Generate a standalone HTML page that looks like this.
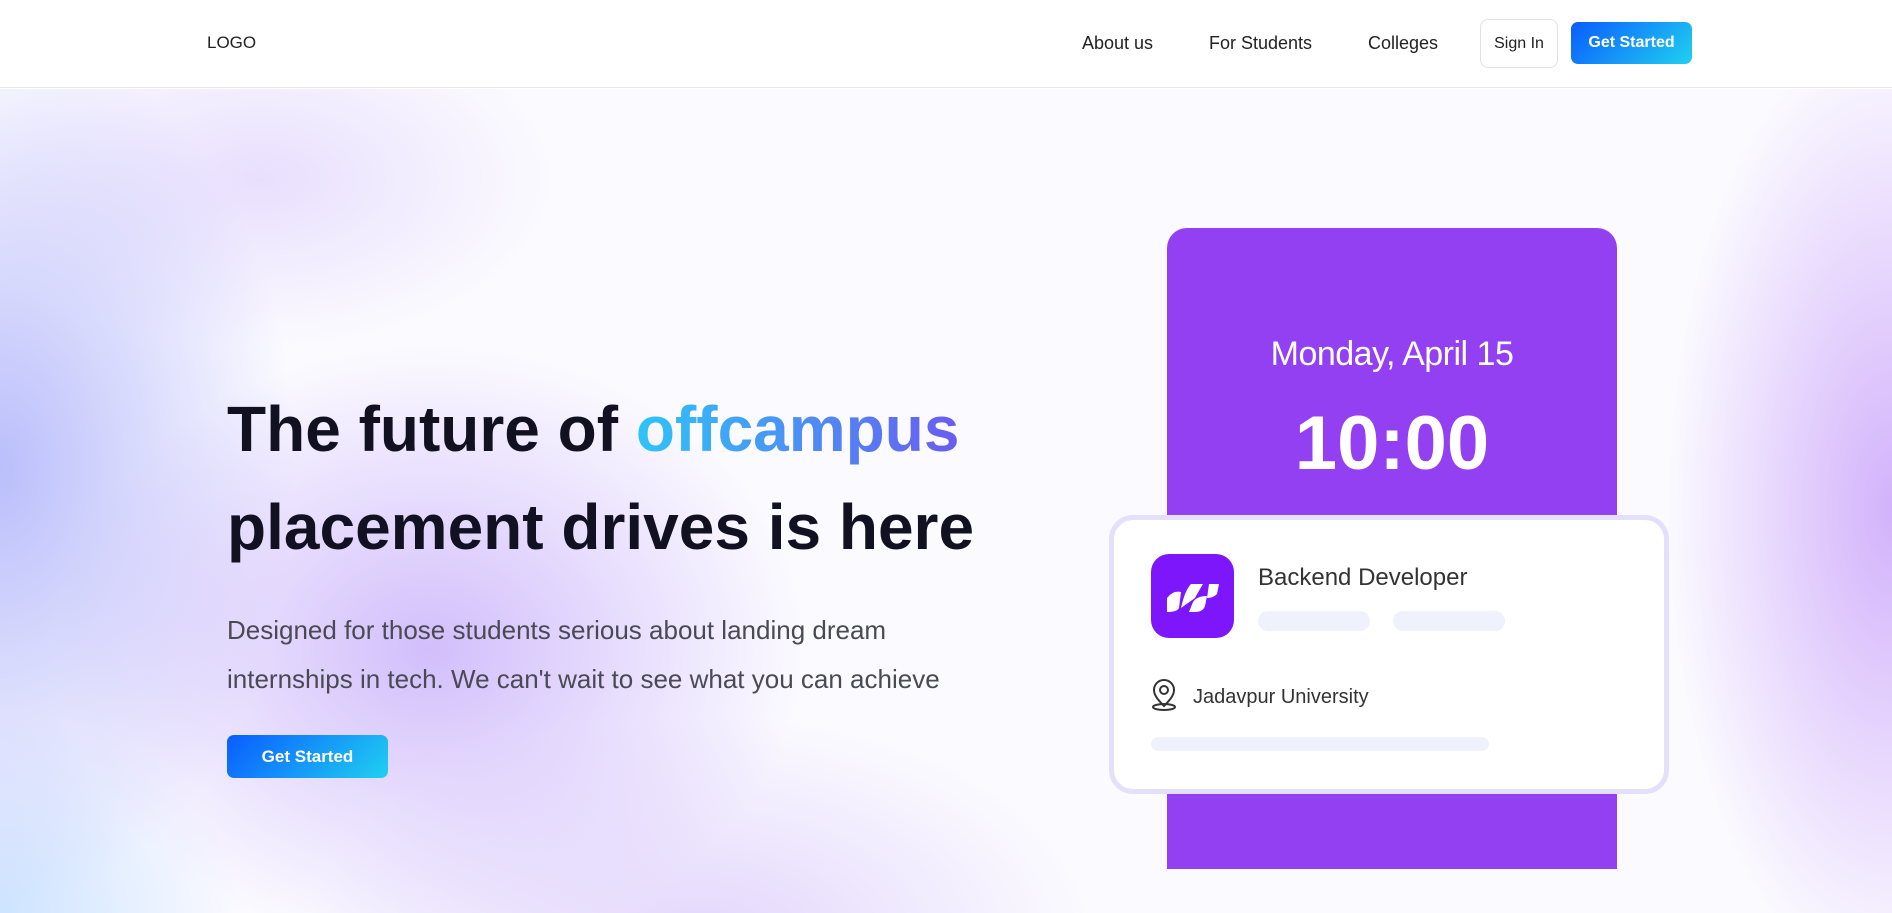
<!DOCTYPE html>
<html><head><meta charset="utf-8"><style>
*{margin:0;padding:0;box-sizing:border-box}
body{width:1892px;height:913px;overflow:hidden;font-family:"Liberation Sans",sans-serif;background:#fff;position:relative}
.hdr{position:absolute;left:0;top:0;width:1892px;height:88px;background:#fff;border-bottom:1px solid #e6e6ea;z-index:2}
.hdr span{position:absolute;font-size:18px;color:#222;top:33px}
.bg{position:absolute;left:0;top:89px;width:1892px;height:824px;
background:
radial-gradient(ellipse 520px 420px at 430px 560px,rgba(196,170,250,.75),rgba(196,170,250,0) 72%),
radial-gradient(ellipse 380px 560px at 0px 380px,rgba(175,180,250,.85),rgba(175,180,250,0) 78%),
radial-gradient(ellipse 320px 260px at 0px 820px,rgba(200,225,255,.9),rgba(200,225,255,0) 75%),
radial-gradient(ellipse 300px 640px at 1892px 420px,rgba(200,160,250,.8),rgba(200,160,250,0) 75%),
radial-gradient(ellipse 560px 320px at 700px 850px,rgba(210,190,250,.6),rgba(210,190,250,0) 70%),
radial-gradient(ellipse 420px 240px at 260px 90px,rgba(220,205,252,.6),rgba(220,205,252,0) 70%),
#fbfaff}
.t{position:absolute;white-space:nowrap}
</style></head><body>
<div class="hdr">
<span style="left:207px;font-size:17px">LOGO</span>
<span style="left:1082px">About us</span>
<span style="left:1209px">For Students</span>
<span style="left:1368px">Colleges</span>
<div style="position:absolute;left:1480px;top:19px;width:78px;height:49px;border:1px solid #e2e2e6;border-radius:8px;font-size:16px;color:#222;text-align:center;line-height:47px">Sign In</div>
<div style="position:absolute;left:1571px;top:22px;width:121px;height:42px;border-radius:7px;background:linear-gradient(135deg,#0a5cff,#20d0f0);color:#fff;font-size:16px;font-weight:bold;text-align:center;line-height:42px">Get Started</div>
</div>
<div class="bg"></div>
<div class="t" style="left:227px;top:380px;font-size:64px;font-weight:bold;color:#111122;line-height:98px">The future of <span style="background:linear-gradient(90deg,#2ec4f8,#6a5cf0);-webkit-background-clip:text;color:transparent">offcampus</span><br>placement drives is here</div>
<div class="t" style="left:227px;top:606px;font-size:26px;color:#4a4a55;line-height:49px">Designed for those students serious about landing dream<br>internships in tech. We can't wait to see what you can achieve</div>
<div style="position:absolute;left:227px;top:735px;width:161px;height:43px;border-radius:7px;background:linear-gradient(135deg,#0a5cff,#20d0f0);color:#fff;font-size:17px;font-weight:bold;text-align:center;line-height:43px">Get Started</div>
<div style="position:absolute;left:1167px;top:228px;width:450px;height:641px;background:#9340f2;border-radius:20px 20px 0 0"></div>
<div class="t" style="left:1167px;width:450px;text-align:center;top:335px;font-size:34px;color:#fff;letter-spacing:-0.5px">Monday, April 15</div>
<div class="t" style="left:1167px;width:450px;text-align:center;top:400px;font-size:76px;font-weight:bold;color:#fff">10:00</div>
<div style="position:absolute;left:1109px;top:515px;width:560px;height:279px;background:#fff;border:5px solid #e4e0fb;border-radius:24px"></div>
<div style="position:absolute;left:1151px;top:554px;width:83px;height:84px;background:#7d16fb;border-radius:18px">
<svg width="83" height="84" viewBox="0 0 83 84"><path d="M16 58 L16 44 Q22 36 30 38 L28 54 Q26 58 16 58Z M30 54 Q34 36 40 30 L52 30 Q46 40 44 44 Z M38 58 L42 48 Q46 42 56 42 L54 52 Q52 58 44 58Z M56 44 L58 30 L68 30 L66 40 Q62 44 56 44Z" fill="#fff"/></svg>
</div>
<div class="t" style="left:1258px;top:564px;font-size:24px;color:#333">Backend Developer</div>
<div style="position:absolute;left:1258px;top:611px;width:112px;height:20px;background:#eff2fc;border-radius:10px"></div>
<div style="position:absolute;left:1393px;top:611px;width:112px;height:20px;background:#eff2fc;border-radius:10px"></div>
<svg style="position:absolute;left:1150px;top:678px" width="28" height="34" viewBox="0 0 28 34" fill="none" stroke="#333" stroke-width="2"><path d="M14 28 C6 20 4 16 4 12 A10 10 0 0 1 24 12 C24 16 22 20 14 28Z"/><circle cx="14" cy="12" r="4"/><ellipse cx="14" cy="29" rx="11" ry="3"/></svg>
<div class="t" style="left:1193px;top:686px;font-size:20px;color:#333">Jadavpur University</div>
<div style="position:absolute;left:1151px;top:737px;width:338px;height:14px;background:#eff2fc;border-radius:7px"></div>
</body></html>
